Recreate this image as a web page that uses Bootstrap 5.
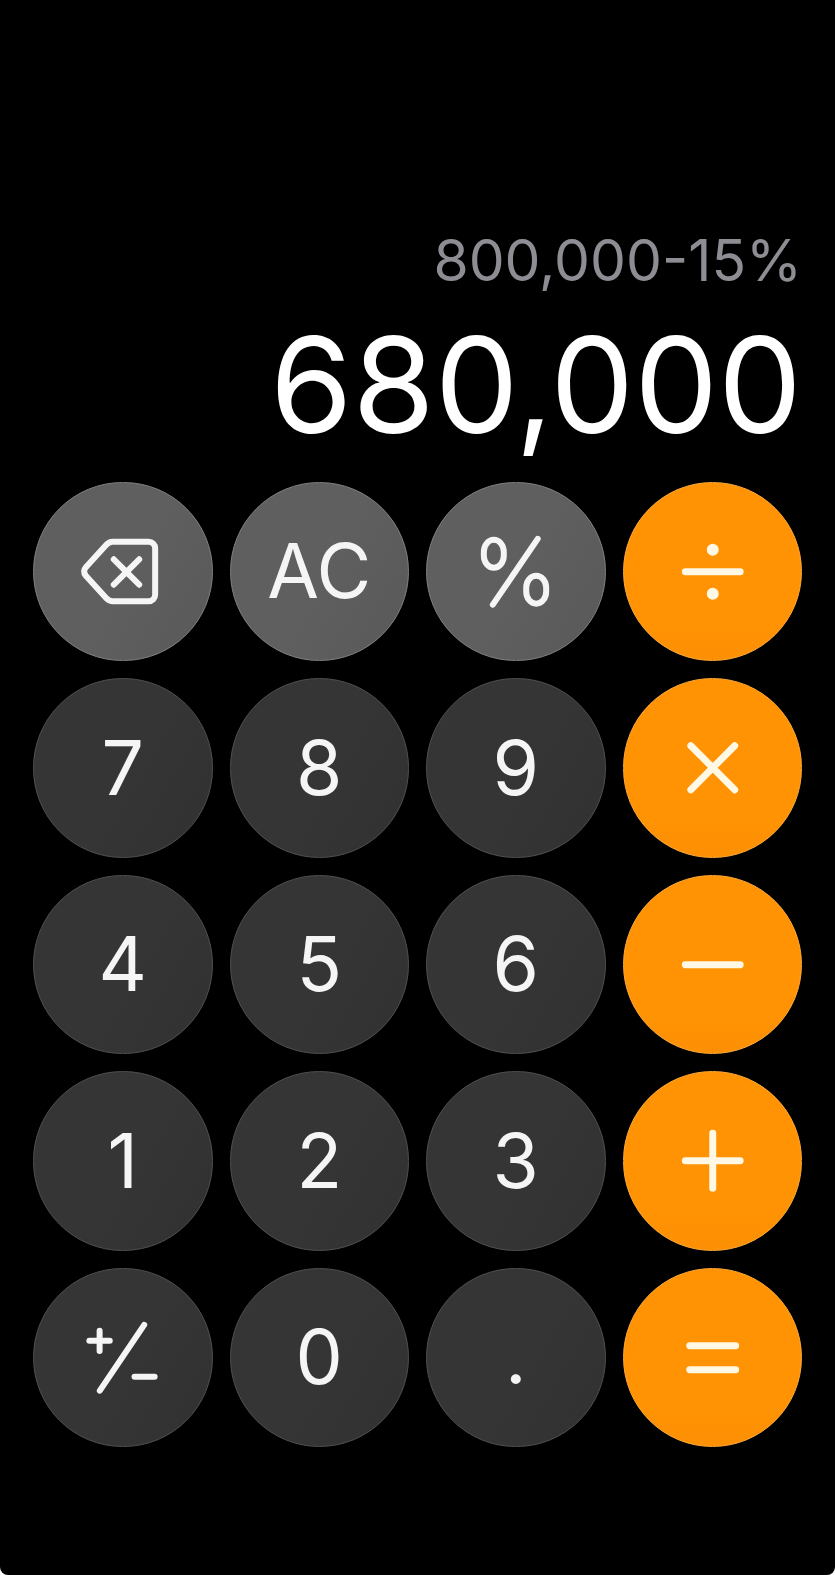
<!DOCTYPE html>
<html lang="en">
<head>
<meta charset="utf-8">
<meta name="viewport" content="width=device-width, initial-scale=1">
<title>Calculator</title>
<link href="https://cdn.jsdelivr.net/npm/bootstrap@5.3.0/dist/css/bootstrap.min.css" rel="stylesheet">
<style>
  body { background: #fff; font-family: Inter, "Liberation Sans", sans-serif; }
  .calc { background: #000; padding: 0 33px 128px; border-radius: 0 0 8px 8px; }
  .history { color: #8e8d93; font-size: 57px; line-height: 72px; }
  .result { color: #fff; font-size: 133px; line-height: 160px; }
  .readout { padding-bottom: 17px; }
  .keypad { --bs-gutter-x: 17px; --bs-gutter-y: 17px; }
  .key {
    --bs-btn-color: #f5f5f5;
    --bs-btn-hover-color: #fff;
    --bs-btn-active-color: #fff;
    --bs-btn-border-width: 1px;
    --bs-btn-padding-x: 0;
    --bs-btn-padding-y: 0;
    font-size: 75px;
    line-height: 90px;
  }
  .key svg { width: 100%; height: 100%; fill: none; stroke: currentColor; stroke-linecap: round; stroke-linejoin: round; stroke-width: 6; }
  .key-digit { background: linear-gradient(120deg, #353535 50%, #313131); border-color: #505050; }
  .key-tool { background: linear-gradient(120deg, #5f5f5f 50%, #595959); border-color: #818181; }
  .key-op { --bs-btn-color: #fff8e4; background: linear-gradient(#ff9303 80%, #fc8f04); border-color: #ffaa38; }
  .key-op svg { stroke-width: 7; }
  .solid { fill: currentColor; stroke: none; }
</style>
</head>
<body>
<main class="calc min-vh-100 d-flex flex-column">
  <div class="readout flex-grow-1 d-flex flex-column justify-content-end text-end">
    <div class="history mb-2">800,000-15%</div>
    <output class="result d-block">680,000</output>
  </div>
  <div class="keypad row row-cols-4">
    <div class="col"><div class="ratio ratio-1x1"><button type="button" class="btn key key-tool rounded-circle" aria-label="Delete"><svg viewBox="1 1 178 178"><path d="M80 60H116a6.500 6.500 0 0 1 6.500 6.500V113a6.500 6.500 0 0 1-6.500 6.500H80q-3.500 0-6-2.500L53 94q-3.500-4.300 0-8.600L74 62.500q2.500-2.500 6-2.500ZM81 77.500l25.500 25.500M106.500 77.500L81 103"/></svg></button></div></div>
    <div class="col"><div class="ratio ratio-1x1"><button type="button" class="btn key key-tool rounded-circle d-flex align-items-center justify-content-center">AC</button></div></div>
    <div class="col"><div class="ratio ratio-1x1"><button type="button" class="btn key key-tool rounded-circle" aria-label="Percent"><svg viewBox="1 1 178 178"><rect x="58" y="58" width="20" height="28" rx="10" ry="12"/><rect x="100.500" y="94" width="20" height="28" rx="10" ry="12"/><path d="M112 57L67 123"/></svg></button></div></div>
    <div class="col"><div class="ratio ratio-1x1"><button type="button" class="btn key key-op rounded-circle" aria-label="Divide"><svg viewBox="1 1 178 178"><path d="M62.500 90H117.500"/><circle class="solid" cx="90" cy="68" r="6"/><circle class="solid" cx="90" cy="112" r="6"/></svg></button></div></div>

    <div class="col"><div class="ratio ratio-1x1"><button type="button" class="btn key key-digit rounded-circle d-flex align-items-center justify-content-center">7</button></div></div>
    <div class="col"><div class="ratio ratio-1x1"><button type="button" class="btn key key-digit rounded-circle d-flex align-items-center justify-content-center">8</button></div></div>
    <div class="col"><div class="ratio ratio-1x1"><button type="button" class="btn key key-digit rounded-circle d-flex align-items-center justify-content-center">9</button></div></div>
    <div class="col"><div class="ratio ratio-1x1"><button type="button" class="btn key key-op rounded-circle" aria-label="Multiply"><svg viewBox="1 1 178 178"><path d="M68 68L112 112M112 68L68 112"/></svg></button></div></div>

    <div class="col"><div class="ratio ratio-1x1"><button type="button" class="btn key key-digit rounded-circle d-flex align-items-center justify-content-center">4</button></div></div>
    <div class="col"><div class="ratio ratio-1x1"><button type="button" class="btn key key-digit rounded-circle d-flex align-items-center justify-content-center">5</button></div></div>
    <div class="col"><div class="ratio ratio-1x1"><button type="button" class="btn key key-digit rounded-circle d-flex align-items-center justify-content-center">6</button></div></div>
    <div class="col"><div class="ratio ratio-1x1"><button type="button" class="btn key key-op rounded-circle" aria-label="Subtract"><svg viewBox="1 1 178 178"><path d="M62.500 90H117.500"/></svg></button></div></div>

    <div class="col"><div class="ratio ratio-1x1"><button type="button" class="btn key key-digit rounded-circle d-flex align-items-center justify-content-center">1</button></div></div>
    <div class="col"><div class="ratio ratio-1x1"><button type="button" class="btn key key-digit rounded-circle d-flex align-items-center justify-content-center">2</button></div></div>
    <div class="col"><div class="ratio ratio-1x1"><button type="button" class="btn key key-digit rounded-circle d-flex align-items-center justify-content-center">3</button></div></div>
    <div class="col"><div class="ratio ratio-1x1"><button type="button" class="btn key key-op rounded-circle" aria-label="Add"><svg viewBox="1 1 178 178"><path d="M62.500 90H117.500M90 62.500V117.500"/></svg></button></div></div>

    <div class="col"><div class="ratio ratio-1x1"><button type="button" class="btn key key-digit rounded-circle" aria-label="Change sign"><svg viewBox="1 1 178 178"><path d="M111.500 57L67 123"/><path d="M56.500 73H77M66.800 62.800V83.200M101.800 109H122"/></svg></button></div></div>
    <div class="col"><div class="ratio ratio-1x1"><button type="button" class="btn key key-digit rounded-circle d-flex align-items-center justify-content-center">0</button></div></div>
    <div class="col"><div class="ratio ratio-1x1"><button type="button" class="btn key key-digit rounded-circle d-flex align-items-center justify-content-center">.</button></div></div>
    <div class="col"><div class="ratio ratio-1x1"><button type="button" class="btn key key-op rounded-circle" aria-label="Equals"><svg viewBox="1 1 178 178"><path d="M67 78H113M67 102H113"/></svg></button></div></div>
  </div>
</main>
<script src="https://cdn.jsdelivr.net/npm/bootstrap@5.3.0/dist/js/bootstrap.bundle.min.js"></script>
</body>
</html>
